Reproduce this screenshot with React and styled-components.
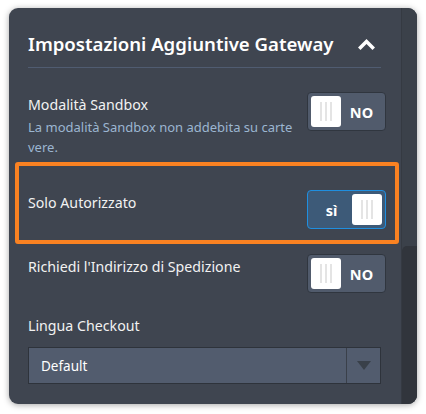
import React from 'react';
import styled, { createGlobalStyle, css } from 'styled-components';

const GlobalStyle = createGlobalStyle`
    html, body {
        margin: 0;
        padding: 0;
        background: #ffffff;
    }
    body {
        font-family: "Noto Sans", "Open Sans", sans-serif;
    }
`;

const Page = styled.div`
    padding: 8px 9px 10px 9px;
`;

const Panel = styled.div`
    display: flex;
    width: 408px;
    height: 396px;
    background: #3f4550;
    border-radius: 9px;
    overflow: hidden;
    box-shadow: 0 1px 6px rgba(0, 0, 0, 0.35);
`;

const Content = styled.div`
    flex: 1;
    padding: 0 15px 0 19px;
`;

const ScrollTrack = styled.div`
    width: 15px;
    background: #3b414a;
    border-left: 1px solid #353a42;
    display: flex;
    flex-direction: column;
`;

const ScrollThumb = styled.div`
    margin-top: 238px;
    flex: 1;
    background: #31353c;
    border-radius: 5px 0 0 0;
`;

const Header = styled.div`
    display: flex;
    align-items: center;
    justify-content: space-between;
    margin-right: 5px;
    padding: 23px 6px 10px 0;
    border-bottom: 1px solid #505c71;
`;

const Title = styled.h2`
    margin: 0;
    font-size: 18.6px;
    font-weight: 600;
    line-height: 26px;
    color: #ffffff;
`;

const Row = styled.div`
    display: flex;
    justify-content: space-between;
    align-items: flex-start;
    ${({ highlighted }) => highlighted && css`
        margin: 0 -13px;
        padding: 24px 9px 11px 9px;
        border: 4px solid #fa8222;
        border-radius: 3px;
    `}
`;

const LabelBlock = styled.div`
    padding-top: 3px;
    max-width: 270px;
`;

const Label = styled.div`
    font-size: 14.2px;
    line-height: 20px;
    color: #f2f2f2;
`;

const Description = styled.div`
    margin-top: 2px;
    font-size: 13px;
    line-height: 20px;
    color: #9cb6d1;
`;

const ToggleBox = styled.div`
    box-sizing: border-box;
    display: flex;
    align-items: center;
    flex-direction: ${({ on }) => (on ? 'row-reverse' : 'row')};
    width: 79px;
    height: 39px;
    padding: 3px;
    border-radius: 4px;
    border: 1px solid ${({ on }) => (on ? '#1f8fe0' : '#30363f')};
    background: ${({ on }) => (on ? '#3d5a78' : '#515b6c')};
`;

const Knob = styled.div`
    display: flex;
    justify-content: center;
    gap: 3px;
    align-items: center;
    width: 30px;
    height: 31px;
    border-radius: 3px;
    background: #ffffff;

    span {
        width: 2px;
        height: 19px;
        background: #e4e4e4;
    }
`;

const ToggleText = styled.div`
    flex: 1;
    text-align: center;
    font-size: 14.5px;
    font-weight: 700;
    color: #ffffff;
`;

const Toggle = ({ on }) => (
    <ToggleBox on={on}>
        <Knob>
            <span />
            <span />
            <span />
        </Knob>
        <ToggleText>{on ? 'sì' : 'NO'}</ToggleText>
    </ToggleBox>
);

const Field = styled.div`
    margin-right: 5px;
`;

const Select = styled.div`
    display: flex;
    height: 37px;
    margin-top: 11px;
    box-sizing: border-box;
    background: #525c6e;
    border: 1px solid #2e333b;
`;

const SelectValue = styled.div`
    flex: 1;
    display: flex;
    align-items: center;
    padding-left: 12px;
    font-size: 13.5px;
    color: #ffffff;
`;

const SelectArrow = styled.div`
    width: 33px;
    display: flex;
    align-items: center;
    justify-content: center;
    border-left: 1px solid #3a404a;
`;

const Chevron = () => (
    <svg width="17" height="12" viewBox="0 0 17 12">
        <path d="M2.5 9.5 L8.5 3.5 L14.5 9.5" fill="none" stroke="#ffffff" strokeWidth="3.5" strokeLinecap="square" />
    </svg>
);

const App = () => (
    <>
        <GlobalStyle />
        <Page>
            <Panel>
                <Content>
                    <Header>
                        <Title>Impostazioni Aggiuntive Gateway</Title>
                        <Chevron />
                    </Header>

                    <Row style={{ marginTop: 24 }}>
                        <LabelBlock>
                            <Label>Modalità Sandbox</Label>
                            <Description>La modalità Sandbox non addebita su carte vere.</Description>
                        </LabelBlock>
                        <Toggle on={false} />
                    </Row>

                    <Row highlighted style={{ marginTop: 5 }}>
                        <LabelBlock>
                            <Label>Solo Autorizzato</Label>
                        </LabelBlock>
                        <Toggle on />
                    </Row>

                    <Row style={{ marginTop: 10 }}>
                        <LabelBlock>
                            <Label>Richiedi l'Indirizzo di Spedizione</Label>
                        </LabelBlock>
                        <Toggle on={false} />
                    </Row>

                    <Field style={{ marginTop: 23 }}>
                        <Label>Lingua Checkout</Label>
                        <Select>
                            <SelectValue>Default</SelectValue>
                            <SelectArrow>
                                <svg width="14" height="9" viewBox="0 0 14 9">
                                    <path d="M0 0 H14 L7 9 Z" fill="#394049" />
                                </svg>
                            </SelectArrow>
                        </Select>
                    </Field>
                </Content>
                <ScrollTrack>
                    <ScrollThumb />
                </ScrollTrack>
            </Panel>
        </Page>
    </>
);

export default App;
